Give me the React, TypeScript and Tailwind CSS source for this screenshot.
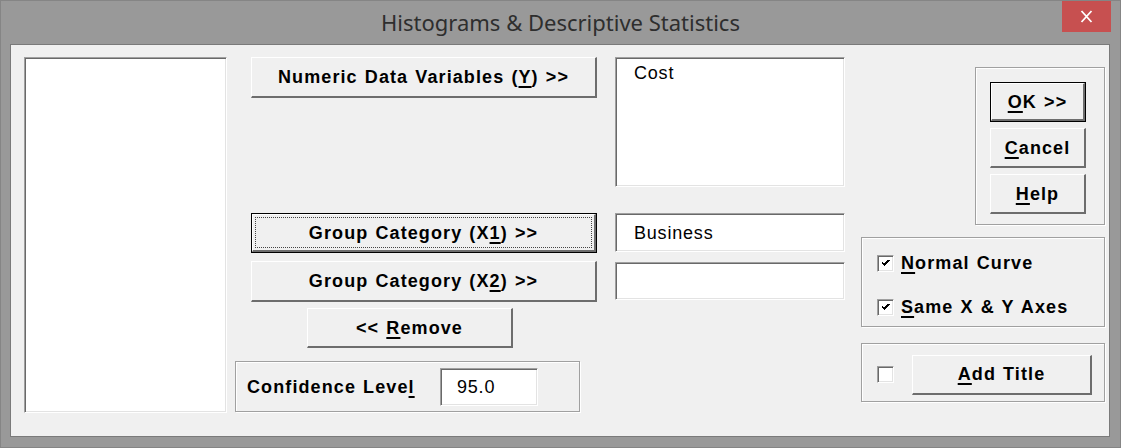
import React from 'react'

const raised =
  'flex items-center justify-center bg-[#f0f0f0] border-t border-l border-r-2 border-b-2 border-t-white border-l-white border-r-[#6d6d6d] border-b-[#6d6d6d]'
const sunken =
  'bg-white border border-t-[#a0a0a0] border-l-[#a0a0a0] border-b-white border-r-white shadow-[inset_1px_1px_0_#696969,inset_-1px_-1px_0_#e3e3e3]'
const etched = 'border border-[#a0a0a0] shadow-[inset_1px_1px_0_#fff,1px_1px_0_#fff]'
const bold = 'text-[18px] font-bold leading-none tracking-[1.1px] [word-spacing:1px]'
const plain = 'text-[18px] leading-none tracking-[0.8px]'

const U: React.FC<{ children: React.ReactNode }> = ({ children }) => (
  <span className="underline underline-offset-[3px] decoration-[1.5px]">{children}</span>
)

const Button: React.FC<{ className?: string; children: React.ReactNode }> = ({ className = '', children }) => (
  <div className={`${raised} ${className}`}>
    <span className={bold}>{children}</span>
  </div>
)

// default / focused button: black outline round a raised face
const DefaultButton: React.FC<{ className?: string; focus?: boolean; children: React.ReactNode }> = ({
  className = '',
  focus,
  children,
}) => (
  <div className={`flex border border-black ${className}`}>
    <div className={`${raised} flex-1 p-[2px]`}>
      <div
        className={`flex-1 self-stretch flex items-center justify-center ${focus ? 'border border-dotted border-[#444]' : ''}`}
      >
        <span className={bold}>{children}</span>
      </div>
    </div>
  </div>
)

const Check: React.FC<{ checked?: boolean }> = ({ checked }) => (
  <div className={`${sunken} w-[17px] h-[17px] flex items-center justify-center shrink-0`}>
    {checked && (
      <svg width="9" height="8" viewBox="0 0 9 8" shapeRendering="crispEdges">
        <polyline points="1,3.5 3.5,6 8,1" fill="none" stroke="#000" strokeWidth="2" />
      </svg>
    )}
  </div>
)

export default function App() {
  return (
    <div className="w-[1121px] h-[448px] bg-[#999999] border border-[#858585] flex flex-col font-['Liberation_Sans',Arial,sans-serif] text-black">
      {/* Title bar */}
      <div className="relative h-[43px] flex items-center justify-center">
        <span className="font-['Noto_Sans',sans-serif] text-[22px] text-[#2e2e2e] -mt-[1px]">
          Histograms &amp; Descriptive Statistics
        </span>
        <div className="absolute top-0 right-[9px] w-[49px] h-[31px] bg-[#c75050] flex items-center justify-center">
          <svg width="13" height="13" viewBox="0 0 13 13">
            <path d="M1.5 1 L11.5 12 M11.5 1 L1.5 12" stroke="#fff" strokeWidth="1.8" fill="none" />
          </svg>
        </div>
      </div>

      {/* Client area */}
      <div className="ml-[9px] w-[1100px] h-[393px] bg-[#f0f0f0] border border-[#7a7a7a] flex items-start">
        {/* Source variable list */}
        <div className={`${sunken} ml-[13px] mt-[12px] w-[203px] h-[356px]`} />

        {/* Move buttons */}
        <div className="ml-[8px] w-[362px] flex flex-col items-start">
          <Button className="ml-[16px] mt-[12px] w-[346px] h-[41px]">
            Numeric Data Variables (<U>Y</U>) &gt;&gt;
          </Button>
          <DefaultButton focus className="ml-[16px] mt-[115px] w-[346px] h-[40px]">
            Group Category (X<U>1</U>) &gt;&gt;
          </DefaultButton>
          <Button className="ml-[16px] mt-[8px] w-[346px] h-[41px]">
            Group Category (X<U>2</U>) &gt;&gt;
          </Button>
          <Button className="ml-[72px] mt-[6px] w-[206px] h-[40px]">
            &lt;&lt; <U>R</U>emove
          </Button>
          <div className={`${etched} mt-[13px] w-[345px] h-[51px] flex items-center pl-[11px]`}>
            <span className={`${bold} flex-1`}>
              Confidence Leve<U>l</U>
            </span>
            <div className={`${sunken} mr-[41px] w-[98px] h-[38px] flex items-center pl-[16px]`}>
              <span className={plain}>95.0</span>
            </div>
          </div>
        </div>

        {/* Selected variables */}
        <div className="ml-[18px] w-[230px] flex flex-col">
          <div className={`${sunken} mt-[12px] h-[130px] pl-[18px] pt-[4px]`}>
            <span className={`${plain} leading-[22px]`}>Cost</span>
          </div>
          <div className={`${sunken} mt-[26px] h-[39px] flex items-center pl-[18px]`}>
            <span className={plain}>Business</span>
          </div>
          <div className={`${sunken} mt-[10px] h-[38px]`} />
        </div>

        {/* Right column */}
        <div className="ml-[16px] w-[244px] flex flex-col items-start">
          <div className={`${etched} ml-[114px] mt-[22px] w-[130px] h-[158px] flex flex-col pl-[14px] pt-[14px] gap-[6px]`}>
            <DefaultButton className="w-[96px] h-[40px]">
              <U>O</U>K &gt;&gt;
            </DefaultButton>
            <Button className="w-[96px] h-[40px]">
              <U>C</U>ancel
            </Button>
            <Button className="w-[96px] h-[40px]">
              <U>H</U>elp
            </Button>
          </div>

          <div className={`${etched} mt-[12px] w-[244px] h-[90px] flex flex-col gap-[26px] pl-[15px] pt-[16px]`}>
            <div className="flex items-center gap-[7px]">
              <Check checked />
              <span className={bold}>
                <U>N</U>ormal Curve
              </span>
            </div>
            <div className="flex items-center gap-[7px]">
              <Check checked />
              <span className={bold}>
                <U>S</U>ame X &amp; Y Axes
              </span>
            </div>
          </div>

          <div className={`${etched} mt-[16px] w-[244px] h-[59px] flex items-center pl-[15px] pt-[4px]`}>
            <Check />
            <Button className="ml-[18px] w-[180px] h-[40px]">
              <U>A</U>dd Title
            </Button>
          </div>
        </div>
      </div>
    </div>
  )
}
